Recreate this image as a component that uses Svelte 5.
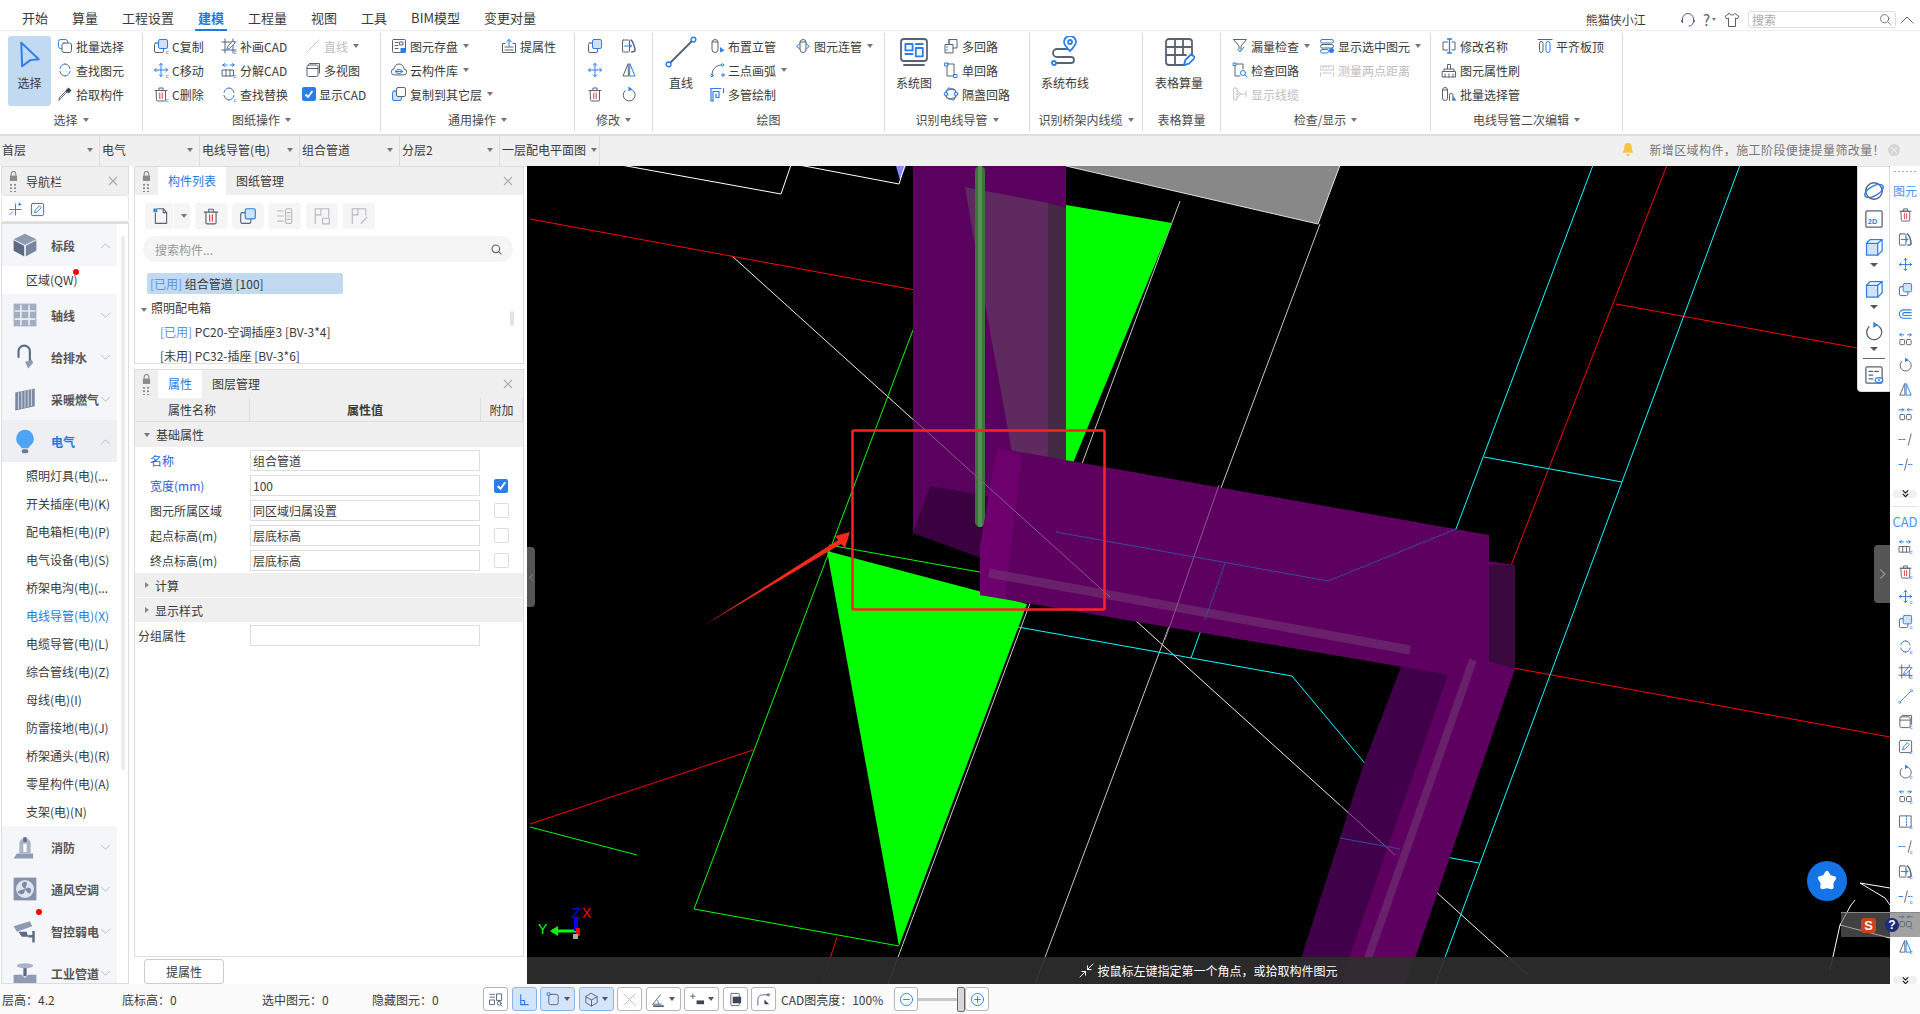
<script lang="ts">
  // icon strokes: default comes from .ic, these override per shape
  const b = 'stroke="#2b7de9"';
  const r = 'stroke="#e23b3b"';
  const fb = 'fill="#cfe2fb"';
  const c = '<text x="12.5" y="15.5" font-size="6" font-family="Liberation Sans" fill="#2b7de9" stroke="none">c</text>';
  const arrows4 = `<path ${b} d="M8 1.5v13M1.5 8h13M6.3 3.2 8 1.5l1.7 1.7M6.3 12.8 8 14.5l1.7-1.7M3.2 6.3 1.5 8l1.7 1.7M12.8 6.3 14.5 8l-1.7 1.7" stroke-dasharray="none"/>`;
  const trash = `<path d="M3.5 4.5h9v9.5a1 1 0 0 1-1 1h-7a1 1 0 0 1-1-1zM2 4.5h12M6 4.5V2h4v2.5"/><path ${r} d="M6.8 7v5.5M9.2 7v5.5"/>`;
  const copy = `<rect x="1.5" y="5" width="9" height="9.5" rx="1.5"/><rect x="5.5" y="1.5" width="9" height="9" rx="1.5" ${fb} ${b}/>`;
  const rotate = `<path d="M9 3a6 6 0 1 1-5 1.6"/><path fill="#2b7de9" stroke="none" d="M7.5.5 11 3 7.5 5.5z"/>`;
  const swap = `<path ${b} d="M3 6.5C3.5 3.5 6 2 8 2M13 9.5c-.5 3-3 4.500-5 4.500"/><path d="M8 2c2.500 0 4.500 2 5 4.500M8 14c-2.500 0-4.500-2-5-4.500"/>`;
  const parts = `<path ${b} d="M2 3h4M2 3l1.500-1.500M2 3l1.500 1.500M14 3h-4M14 3l-1.500-1.500M14 3l-1.500 1.500"/><rect x="2" y="8" width="5" height="5.500" rx="1"/><rect x="9" y="8" width="5" height="5.500" rx="1"/>`;
  const partsIn = `<path ${b} d="M1 3h5M6 3 4.500 1.500M6 3 4.500 4.500M15 3h-5M10 3l1.500-1.500M10 3l1.500 1.500"/><rect x="2" y="8" width="5" height="5.500" rx="1"/><rect x="9" y="8" width="5" height="5.500" rx="1"/>`;
  const mirror = `<path d="M7 2 2 14h5z"/><path ${b} d="M9 2l5 12H9z"/>`;
  const crop = `<path d="M4 1v14M1 12h14M1 4h14M12 1v14"/><path ${b} fill="#fff" d="m6 11 1-3 5-5 2 2-5 5z"/>`;
  const window_ = `<rect x="2" y="3" width="11" height="11.500" rx="1.500"/><path d="M2 6.500h11M4.500 1.500H14.500V11"/>`;

  const icons: Record<string, string> = {
    cursor: `<path ${b} stroke-width="1.100" fill="none" d="M3 1.500 13 11 8.200 11.500 3.500 15z"/>`,
    batch: `<rect x="1.500" y="1.500" width="9" height="9" rx="2" ${b}/><rect x="5" y="5" width="9.500" height="9.500" rx="2" fill="#fff"/>`,
    find: swap,
    pick: `<path d="m10 6-6 6-2 2.500.5-3 6-6z"/><path fill="#3c4655" stroke="none" d="m8.500 4.500 3-3 3 3-3 3z"/>`,
    ccopy: copy + c,
    cmove: arrows4 + c,
    cdel: trash + c,
    patch: crop + c,
    explode: `<path ${b} d="M2 3h4M2 3l1.500-1.500M2 3l1.500 1.500M13 3H9M13 3l-1.500-1.500M13 3l-1.500 1.500"/><rect x="1.500" y="8" width="11" height="6" /><path d="M5 8v6M9 8v6"/>` + c,
    replace: swap + c,
    line: `<path d="M2 14 14 2"/>`,
    multi: window_,
    save: `<rect x="1.500" y="1.500" width="13" height="13" rx="1"/><path d="M4 4.500h3M4 7.500h3M4 10.500h3M9 4h3v3H9z"/><rect x="9.500" y="10" width="5" height="5" fill="#2b7de9" stroke="none"/>`,
    cloud: `<path d="M3.500 13a3 3 0 0 1-.5-6 5 5 0 0 1 10 0 3 3 0 0 1-.5 6z"/><ellipse ${b} cx="8" cy="9.500" rx="3.500" ry="2"/><path ${b} d="M4.500 9.500h7"/>`,
    copyfloor: `<rect x="1.500" y="5" width="9" height="9.500" rx="1.500" ${fb} ${b}/><rect x="5.500" y="1.500" width="9" height="9" rx="1.500" fill="#fff"/>`,
    extract: `<path ${b} d="M8 8V1.500M5.500 4 8 1.500 10.500 4"/><path d="M4 5.500H1.500v9h13v-9H12M4 9h8M4 12h8"/>`,
    copy,
    mirrorin: `<rect x="1.500" y="2" width="7" height="12" rx="1"/><path ${b} d="M3.500 8h7M8 5.500 10.500 8 8 10.500"/><path stroke-width="1.500" d="M10 2c2 1 4 8 4 10s-2 2-3.500 2"/>`,
    move: arrows4,
    mirror,
    trash,
    rotate,
    stand: `<rect x="3" y="1.500" width="6" height="13" rx="3"/><path d="M3 4h6"/><path fill="#2b7de9" stroke="none" d="m11 9 4.500 3.500-4.500 2z"/>`,
    link: `<rect x="5" y="1.500" width="6" height="13" rx="3"/><path d="M5 4h6"/><path ${b} d="M5 5.500 1.500 8.500 5 11M11 5.500l3.500 3-3.500 2.500"/>`,
    arc: `<path d="M3 13C3 7 7 3 13 3"/><circle cx="3" cy="13.500" r="1.200" ${b} fill="#fff"/><circle cx="13.500" cy="3" r="1.200" ${b} fill="#fff"/><circle cx="14" cy="13" r="1.200" ${b} fill="#fff"/>`,
    multipipe: `<path ${b} stroke-width="1.200" d="M2 2.500h10M14.500 2.500v4M4 15V5.500h6v6H7V8"/><path ${b} stroke-width="1.200" d="M2 2.500V15h2"/>`,
    loops: `<path d="M2 14.500V6.500h4V1.500h8V10H10v4.500zM6 6.500h4V10M6 1.500V6.500"/><path ${b} d="M3.500 9h1M3.500 12h1"/>`,
    single: `<path d="M4 3v11h8"/><rect x="2" y="1" width="3" height="3" ${b} fill="#fff"/><rect x="11" y="12.500" width="3" height="3" ${b} fill="#fff"/><path d="M4 2h7v11"/>`,
    ring: `<rect x="3" y="3" width="10" height="10" rx="4" stroke-width="1.500"/><circle cx="3" cy="8" r="1.800" ${b} fill="#cfe2fb"/><circle cx="13" cy="8" r="1.800" ${b} fill="#cfe2fb"/><circle cx="6" cy="3" r="1.200" ${b} fill="#fff"/><circle cx="10" cy="13" r="1.200" ${b} fill="#fff"/>`,
    funnel: `<path d="M1.500 1.500h13L9 8v4"/><path d="M1.500 1.500 7 8v3"/><path ${b} d="M6 11.500 8 14l4-5"/>`,
    checkloop: `<path d="M3 2v12h5M3 2h8v5"/><circle cx="11" cy="11" r="2.500" ${b}/><path ${b} d="m13 13 2 2"/><rect x="1.500" y="1" width="2.500" height="2.500" ${b} fill="#fff"/>`,
    showline: `<path d="M2 2h3v12H2zM5 8h9M5 4l4 4-4 4M14 5v6"/>`,
    showsel: `<rect x="1.500" y="1.500" width="13" height="3.500" rx="1.700" ${b}/><rect x="1.500" y="6.500" width="13" height="3.500" rx="1.700"/><rect x="1.500" y="11.500" width="8" height="3.500" rx="1.700" ${b}/><circle cx="12.500" cy="12.500" r="2.500" fill="#2b7de9" stroke="none"/>`,
    measure: `<path d="M1.500 4h13v4h-13zM1.500 11v3M14.500 11v3M4 11h8M4 4v2M7 4v2M10 4v2"/>`,
    rename: `<path d="M6.500 4H2v8h4.500M11 12h3V4h-3"/><path ${b} stroke-width="1.300" d="M8.500 1v14M6.500 1h4M6.500 15h4"/>`,
    brush: `<path d="M1.500 9.500h13v5.500h-13zM4 12v3M8 12v3M12 12v3M3 9.500V7h10v2.500M6.500 7V2.500h3V7"/>`,
    batchpipe: `<rect x="1.500" y="1.500" width="5" height="13" rx="2.500"/><path d="M1.500 4h5M8.500 14.500V9a1.700 1.700 0 0 1 3.400 0v5.500"/><path fill="#2b7de9" stroke="none" d="m12 10 3.500 4.500H12z"/>`,
    align: `<path d="M1 1.500h14"/><rect x="2.500" y="3.500" width="3.500" height="11" rx="1.700"/><rect x="9" y="3.500" width="4" height="11" rx="2" ${b}/>`,
    sysmap: `<rect x="1.500" y="1.500" width="13" height="11" rx="1.500" stroke-width=".9"/><path stroke-width=".9" d="M3 14.500h10"/><path ${b} stroke-width=".9" fill="none" d="M3.700 4h3.600v3.200H3.700zM3.700 9h3.600M8.900 4h3.500M8.900 6h3.500v4.200H8.900z"/>`,
    route: `<path stroke-width=".9" d="M11.500 6.500H4a2 2 0 0 0 0 4h7a1.500 1.500 0 0 1 0 3H3.500"/><circle cx="2.500" cy="13.500" r="1" ${b} stroke-width=".9" fill="#fff"/><path ${b} stroke-width=".9" fill="#fff" d="M10.500 7.500c-2-2-3-3.200-3-4.500a3 3 0 0 1 6 0c0 1.300-1 2.500-3 4.500z"/><circle cx="10.500" cy="3" r="1" ${b} stroke-width=".9"/>`,
    bigline: `<path stroke-width=".9" d="M2 14 14 2"/><circle cx="1.800" cy="14.200" r="1.200" ${b} stroke-width=".7" fill="#fff"/><circle cx="14.200" cy="1.800" r="1.200" ${b} stroke-width=".7" fill="#fff"/>`,
    table: `<path stroke-width=".9" d="M11 14.500H3a1.500 1.500 0 0 1-1.500-1.500V3A1.500 1.500 0 0 1 3 1.500h10A1.500 1.500 0 0 1 14.500 3v6M1.500 5.500h13M1.500 9.500h10M6 1.500v13M10 1.500v8"/><path ${b} stroke-width=".9" fill="#fff" d="m10.500 14.500.7-2.500 3-3 1.800 1.800-3 3z"/>`,
    sphere: `<circle cx="8" cy="8" r="6"/><ellipse ${b} cx="8" cy="8" rx="7.500" ry="3.500" transform="rotate(-30 8 8)"/>`,
    view2d: `<rect x="1.500" y="1.500" width="13" height="13" rx="1"/><text x="3" y="12" font-size="6" font-weight="700" font-family="Liberation Sans" fill="#2b7de9" stroke="none">2D</text>`,
    cube: `<path ${b} ${fb} d="M2 5h9v9.500H2z"/><path ${b} d="M2 5 5 2h9.500v9l-3.500 3.500M11 5l3.500-3"/>`,
    listeye: `<rect x="1.500" y="1.500" width="13" height="13" rx="1"/><path d="M4 5h3M8.500 5h3M4 8h3M4 11h3"/><ellipse cx="12" cy="12" rx="3" ry="2" ${b} fill="#fff"/><circle cx="12" cy="12" r=".8" fill="#2b7de9" stroke="none"/>`,
    parts,
    partsIn,
    pipe2: `<path ${b} stroke-width="1.200" d="M14 3H6a4 4 0 0 0 0 9h8M14 6H6.500a1.500 1.500 0 0 0 0 3H14"/>`,
    dash1: `<path ${b} d="M1 8h2.500M5 8h2.500"/><path d="M14 2l-3 12"/>`,
    dash2: `<path ${b} d="M1 8h4M11 8h1.500M14 8h1"/><path d="M10 2 7 14"/>`,
    rect: `<path d="M2 2h12v12H2z"/><path ${b} stroke-dasharray="1.500 1.500" d="M9 2v12"/>`,
    plus: `<path ${b} d="M8 2v12M2 8h12"/><path ${b} d="M12.500 1v3M11 2.500h3"/><path fill="#fff" stroke="#2b7de9" d="M2 13.500l3-3"/>`,
    edit: `<rect x="1.500" y="1.500" width="13" height="13" rx="1.500"/><path ${b} d="m5 11 .7-2.500L10 4l2 2-4.500 4.500z"/>`,
    newfile: `<path d="M3 5.500V14.500h10V5L10 1.500H5"/><path d="M10 1.500V5h3"/><path ${b} stroke-dasharray="1 1" stroke-width="1.500" d="M2 2h2v2H2z"/>`,
    tree: `<path d="M1.500 3.500h5M1.500 8h5M1.500 12.500h5"/><rect x="8.500" y="1.500" width="5.500" height="13" rx="1"/><path d="M10 5h2.500M10 8h2.500M10 11h2.500"/>`,
    flpsave: `<path d="M2 14.500V1.500h12V9M2 7h5V1.500"/><rect x="8.500" y="10" width="6" height="5"/>`,
    flpedit: `<path d="M2 14.500V1.500h12V7M2 7h5V1.500M10 14.500 15 9"/>`,
    // status bar glyphs
    rearrange: `<path d="M2 2.500h5M2 5.500h5M2 8.500h5v5H2zM9.500 2h5v7h-5z"/><circle cx="12" cy="12" r="2"/><path d="m13.500 13.500 1.500 1.500"/>`,
    ortho: `<path ${b} stroke-width="1.200" d="M4 3v10.500h8M4 9h4v4.500"/>`,
    rrect: `<rect x="3" y="2.500" width="10" height="11" rx="2"/><rect x="1.500" y="1" width="2.500" height="2.500" ${b} fill="#fff"/>`,
    hexa: `<path d="M8 1.500 14 5v6.500L8 15l-6-3.500V5zM2 5l6 3.500L14 5M8 8.500V15"/>`,
    cross: `<path d="m2 2 12 12M14 2 2 14"/>`,
    angle: `<path d="M2 13 10 3M2 13h9"/><path stroke-width="2" d="M3 15h10"/><path ${b} d="M6.500 8.500c1 1 1.500 2.500 1.500 4"/>`,
    plusbar: `<path d="M3 2v5M.5 4.500h5"/><rect x="7" y="9" width="8" height="4" fill="#3c4655" stroke="none"/>`,
    layers: `<rect x="3" y="1.500" width="9" height="13" rx="1"/><rect x="5" y="5" width="9" height="7" fill="#3c4655" stroke="none"/>`,
    curve: `<path d="M2 14V8a5 5 0 0 1 5-5h6"/><circle cx="13" cy="3" r="1.200"/><path fill="#3c4655" stroke="none" d="m9 8 5 5H9z"/>`,
    // navigation pictograms, filled
    navcube: `<path fill="#8f9bb3" stroke="none" d="M8 1 15 4.500 8 8 1 4.500z"/><path fill="#5d6a84" stroke="none" d="M1 5 7.500 8.500V15L1 11.500z"/><path fill="#78859f" stroke="none" d="M15 5 8.500 8.500V15l6.500-3.500z"/>`,
    navgrid: `<rect x="1" y="1" width="14" height="14" fill="#a4aec2" stroke="none"/><path stroke="#e8ecf2" d="M5.500 2v12M10.500 2v12M2 5.500h12M2 10.500h12"/>`,
    navtap: `<path stroke="#5d6a84" stroke-width="1.300" d="M4 8V4.500a3.500 3.500 0 0 1 7 0V10"/><path fill="#8f9bb3" stroke="none" d="m8 11 4-1.500 1 2-3 3.500z"/>`,
    navrad: `<path fill="#7c89a3" stroke="none" d="M2 4 14 1.500v11L2 15z"/><path stroke="#c8d0dc" stroke-width=".7" d="M4 4v10M6 3.500v10M8 3v10M10 2.500v10M12 2v10"/>`,
    navbulb: `<path fill="#4da3f5" stroke="none" d="M8 1a5.500 5.500 0 0 1 3 10l-1 1.500H6L5 11A5.500 5.500 0 0 1 8 1z"/><rect x="6" y="13" width="4" height="2.500" rx="1" fill="#6d7a93" stroke="none"/>`,
    navfire: `<path fill="#8f9bb3" stroke="none" d="M1 15 3 12h10v3z"/><path fill="#aab4c6" stroke="none" d="M4.500 6a3.500 3.500 0 0 1 7 0v6h-7z"/><rect x="7" y="2" width="2" height="3" fill="#5d6a84" stroke="none"/><rect x="7" y="6" width="2" height="5" fill="#fff" stroke="none"/>`,
    navfan: `<rect x="1" y="1" width="14" height="14" fill="#8591ab" stroke="none"/><circle cx="8" cy="8" r="5.500" fill="#dfe4ec" stroke="none"/><path fill="#7c89a3" stroke="none" d="M8 8C5 6 6 3.500 8 3.500S9 6 8 8zM8 8c3-2 4.500 0 3.500 2S9 9.500 8 8zM8 8c0 3.500-2.500 4-4 2.500S6 8.500 8 8z"/>`,
    navcam: `<path fill="#8f9bb3" stroke="none" d="M1 5 11 2l1.500 3L3 8.500z"/><path fill="#5d6a84" stroke="none" d="M4 8.500h5l1 3H6zM12.500 8h1.500v7h-1.500z"/><path fill="#5d6a84" stroke="none" d="M10 10.500h3v1.500h-3z"/>`,
    navvalve: `<path fill="#8f9bb3" stroke="none" d="M1 9h5l2 2 2-2h5v6H1z"/><rect x="7" y="4" width="2" height="6" fill="#5d6a84" stroke="none"/><ellipse cx="8" cy="3.500" rx="5" ry="1.500" fill="#aab4c6" stroke="none"/>`
  };
  // the CAD half of the rail repeats these with a small "c" mark
  for (const k of ['bigline', 'multi', 'edit', 'rotate', 'parts', 'rect', 'dash1', 'mirrorin', 'dash2', 'partsIn', 'mirror']) {
    icons[k + 'C'] = icons[k] + c;
  }

  type Item = { t?: string; i?: string; caret?: boolean; off?: boolean; check?: boolean };
  type Col = { w: number; big?: string; label?: string; items?: Item[] };
  type Group = { label: string; caret: boolean; w: number; pad: number; cols: Col[] };

  const groups: Group[] = [
    { label: '选择', caret: true, w: 143, pad: 8, cols: [
      { w: 49, big: 'cursor', label: '选择' },
      { w: 80, items: [{ i: 'batch', t: '批量选择' }, { i: 'find', t: '查找图元' }, { i: 'pick', t: '拾取构件' }] }
    ] },
    { label: '图纸操作', caret: true, w: 238, pad: 10, cols: [
      { w: 68, items: [{ i: 'ccopy', t: 'C复制' }, { i: 'cmove', t: 'C移动' }, { i: 'cdel', t: 'C删除' }] },
      { w: 84, items: [{ i: 'patch', t: '补画CAD' }, { i: 'explode', t: '分解CAD' }, { i: 'replace', t: '查找替换' }] },
      { w: 72, items: [{ i: 'line', t: '直线', caret: true, off: true }, { i: 'multi', t: '多视图' }, { check: true, t: '显示CAD' }] }
    ] },
    { label: '通用操作', caret: true, w: 194, pad: 10, cols: [
      { w: 110, items: [{ i: 'save', t: '图元存盘', caret: true }, { i: 'cloud', t: '云构件库', caret: true }, { i: 'copyfloor', t: '复制到其它层', caret: true }] },
      { w: 60, items: [{ i: 'extract', t: '提属性' }] }
    ] },
    { label: '修改', caret: true, w: 78, pad: 12, cols: [
      { w: 34, items: [{ i: 'copy' }, { i: 'move' }, { i: 'trash' }] },
      { w: 20, items: [{ i: 'mirrorin' }, { i: 'mirror' }, { i: 'rotate' }] }
    ] },
    { label: '绘图', caret: false, w: 232, pad: 0, cols: [
      { w: 56, big: 'bigline', label: '直线' },
      { w: 86, items: [{ i: 'stand', t: '布置立管' }, { i: 'arc', t: '三点画弧', caret: true }, { i: 'multipipe', t: '多管绘制' }] },
      { w: 80, items: [{ i: 'link', t: '图元连管', caret: true }] }
    ] },
    { label: '识别电线导管', caret: true, w: 145, pad: 0, cols: [
      { w: 58, big: 'sysmap', label: '系统图' },
      { w: 80, items: [{ i: 'loops', t: '多回路' }, { i: 'single', t: '单回路' }, { i: 'ring', t: '隔盏回路' }] }
    ] },
    { label: '识别桥架内线缆', caret: true, w: 113, pad: 5, cols: [{ w: 60, big: 'route', label: '系统布线' }] },
    { label: '表格算量', caret: false, w: 78, pad: 6, cols: [{ w: 60, big: 'table', label: '表格算量' }] },
    { label: '检查/显示', caret: true, w: 210, pad: 11, cols: [
      { w: 87, items: [{ i: 'funnel', t: '漏量检查', caret: true }, { i: 'checkloop', t: '检查回路' }, { i: 'showline', t: '显示线缆', off: true }] },
      { w: 105, items: [{ i: 'showsel', t: '显示选中图元', caret: true }, { i: 'measure', t: '测量两点距离', off: true }] }
    ] },
    { label: '电线导管二次编辑', caret: true, w: 192, pad: 10, cols: [
      { w: 96, items: [{ i: 'rename', t: '修改名称' }, { i: 'brush', t: '图元属性刷' }, { i: 'batchpipe', t: '批量选择管' }] },
      { w: 70, items: [{ i: 'align', t: '平齐板顶' }] }
    ] }
  ];

  const tabs = ['开始', '算量', '工程设置', '建模', '工程量', '视图', '工具', 'BIM模型', '变更对量'];
  const selects = ['首层', '电气', '电线导管(电)', '组合管道', '分层2', '一层配电平面图'];

  const navTop = [
    { i: 'navcube', t: '标段', open: true },
    { sub: '区域(QW)', dot: true },
    { i: 'navgrid', t: '轴线' },
    { i: 'navtap', t: '给排水' },
    { i: 'navrad', t: '采暖燃气' },
    { i: 'navbulb', t: '电气', open: true, on: true }
  ];
  const navSubs = ['照明灯具(电)(...', '开关插座(电)(K)', '配电箱柜(电)(P)', '电气设备(电)(S)', '桥架电沟(电)(...', '电线导管(电)(X)', '电缆导管(电)(L)', '综合管线(电)(Z)', '母线(电)(I)', '防雷接地(电)(J)', '桥架通头(电)(R)', '零星构件(电)(A)', '支架(电)(N)'];
  const navBottom = [
    { i: 'navfire', t: '消防' },
    { i: 'navfan', t: '通风空调' },
    { i: 'navcam', t: '智控弱电', dot: true },
    { i: 'navvalve', t: '工业管道' }
  ];

  const propRows = [
    { k: '名称', v: '组合管道', blue: true, box: 'none' },
    { k: '宽度(mm)', v: '100', blue: true, box: 'on' },
    { k: '图元所属区域', v: '同区域归属设置', box: 'off' },
    { k: '起点标高(m)', v: '层底标高', box: 'off' },
    { k: '终点标高(m)', v: '层底标高', box: 'off' }
  ];

  const railTop = ['trash', 'mirrorin', 'move', 'copy', 'pipe2', 'parts', 'rotate', 'mirror', 'partsIn', 'dash1', 'dash2'];
  const railCad = ['explode', 'cdel', 'cmove', 'ccopy', 'replace', 'patch', 'bigline', 'multiC', 'editC', 'rotateC', 'partsC', 'rectC', 'dash1C', 'mirrorinC', 'dash2C', 'partsInC', 'mirrorC'];

  const statusBtns = [
    { i: 'rearrange', w: 25 },
    { i: 'ortho', w: 25, on: true },
    { i: 'rrect', w: 35, on: true, caret: true },
    { i: 'hexa', w: 35, on: true, caret: true },
    { i: 'cross', w: 25, off: true },
    { i: 'angle', w: 35, caret: true },
    { i: 'plusbar', w: 35, caret: true },
    { i: 'layers', w: 25 },
    { i: 'curve', w: 25 }
  ];

  // canvas drawing, in page coordinates (the svg viewBox starts at the canvas corner)
  const wires = [
    ['#fff', '621,165 781,194 791,165'],
    ['#fff', '799,165 899,184 905,165'],
    ['#eee', '732,256 1528,975'],
    ['#c8c8c8', '1180,201 888,984'],
    ['#c8c8c8', '1320,224 1035,984'],
    ['#f00', '530,219 926,292'],
    ['#f00', '530,824 753,750'],
    ['#f00', '837,937 822,984'],
    ['#f00', '1667,165 1473,663 1372,984'],
    ['#f00', '1616,304 1890,354'],
    ['#f00', '1481,662 1890,737'],
    ['#0f0', '913,330 694,909 899,946'],
    ['#0f0', '829,545 985,573'],
    ['#0f0', '530,827 637,855'],
    ['#0ff', '1593,165 1456,529 1328,581 1056,532'],
    ['#0ff', '1225,563 1191,658'],
    ['#0ff', '1018,627 1292,676 1368,767'],
    ['#0ff', '1484,457 1622,482'],
    ['#0ff', '1740,165 1435,984'],
    ['#0ff', '1340,838 1479,863'],
    ['#fff', '1860,883 1890,888'],
    ['#fff', '1860,883 1885,898 1890,905'],
    ['#fff', '1840,925 1890,938'],
    ['#fff', '1840,925 1851,905 1855,900'],
    ['#fff', '1840,925 1830,970']
  ];
  // the same wires where they show through the purple ducts
  const dimWires = [
    ['#8a5a90', '913,419 1110,597'],
    ['#8a5a90', '1340,805 1395,855'],
    ['#3a4a9a', '1056,532 1328,581 1456,529'],
    ['#3a4a9a', '1225,563 1205,620'],
    ['#3a4a9a', '1340,838 1400,849'],
    ['#8a5a90', '1219,485 1165,640']
  ];
</script>

{#snippet ic(name: string, size = 16)}
  <svg class="ic" viewBox="0 0 16 16" width={size} height={size}>{@html icons[name]}</svg>
{/snippet}

{#snippet caret()}
  <span class="caret"></span>
{/snippet}

{#snippet chev(up: boolean)}
  <svg class="chev" viewBox="0 0 12 8" width="11" height="7"><path d={up ? 'M1 7l5-5 5 5' : 'M1 1l5 5 5-5'} /></svg>
{/snippet}

{#snippet lock()}
  <div class="lock">
    <svg viewBox="0 0 10 11" width="9" height="10"><path d="M2.500 5V3a2.500 2.500 0 0 1 5 0v2" fill="none" stroke="#8a8a8a" stroke-width="1.300" /><rect x="1" y="5" width="8" height="6" fill="#8a8a8a" /></svg>
    <span class="grip"></span>
  </div>
{/snippet}

{#snippet closeX()}
  <svg class="close" viewBox="0 0 10 10" width="10" height="10"><path d="M1 1l8 8M9 1L1 9" /></svg>
{/snippet}

{#snippet more()}
  <svg viewBox="0 0 10 9" width="9" height="9" fill="none" stroke="#111" stroke-width="1.200"><path d="M2 1l3 3 3-3M2 5l3 3 3-3" /></svg>
{/snippet}

{#snippet navRow(row: any)}
  <div class="nav-row" class:on={row.on}>
    <span class="nav-ic">{@render ic(row.i, 26)}{#if row.dot}<i class="dot cam"></i>{/if}</span>
    <span class="nav-t">{row.t}</span>
    {@render chev(!!row.open)}
  </div>
{/snippet}

<div class="app">
  <div class="tabs">
    {#each tabs as t}
      <span class="tab" class:active={t === '建模'}>{t}</span>
    {/each}
    <span class="user">熊猫侠小江</span>
    <svg class="ic top" viewBox="0 0 16 16" width="16" height="16"><path d="M2.500 10V7a5.500 5.500 0 0 1 11 0v3M2.500 7.500c-1.500 0-1.500 3 0 3M13.500 7.500c1.500 0 1.500 3 0 3M13 11c0 2-2 3-4 3" /></svg>
    <span class="help">?</span><span class="caret tiny"></span>
    <svg class="ic top" viewBox="0 0 16 16" width="16" height="16"><path d="M5 1.500 1 4.500l2 2.500 1.500-1v8.500h7V6l1.500 1 2-2.500-4-3C10 3.500 6 3.500 5 1.500z" /></svg>
    <div class="topsearch">
      <span>搜索</span>
      <svg class="ic" viewBox="0 0 16 16" width="13" height="13"><circle cx="7" cy="7" r="5" /><path d="m11 11 3 3" /></svg>
    </div>
    <svg class="ic collapse" viewBox="0 0 14 8" width="14" height="8"><path d="M1 7l6-6 6 6" /></svg>
  </div>

  <div class="ribbon">
    {#each groups as g}
      <div class="group" style:width="{g.w}px">
        <div class="group-body" style:padding-left="{g.pad}px">
          {#each g.cols as col}
            <div class="col" style:width="{col.w}px">
              {#if col.big}
                <div class="big" class:picked={col.big === 'cursor'}>
                  {@render ic(col.big, col.big === 'cursor' ? 28 : 32)}
                  <span>{col.label}</span>
                </div>
              {:else}
                {#each col.items ?? [] as it}
                  <div class="item" class:off={it.off}>
                    {#if it.check}
                      <span class="check sm"><svg viewBox="0 0 12 12" width="12" height="12"><path d="M2.500 6.500 5 9l4.500-6" /></svg></span>
                    {:else}
                      {@render ic(it.i as string)}
                    {/if}
                    {#if it.t}<span class="item-t">{it.t}</span>{/if}
                    {#if it.caret}{@render caret()}{/if}
                  </div>
                {/each}
              {/if}
            </div>
          {/each}
        </div>
        <div class="group-label">{g.label}{#if g.caret}{@render caret()}{/if}</div>
      </div>
    {/each}
  </div>

  <div class="selbar">
    {#each selects as s}
      <div class="sel"><span>{s}</span>{@render caret()}</div>
    {/each}
    <div class="notice">
      <svg viewBox="0 0 14 16" width="14" height="15"><path fill="#f6c343" d="M7 1c3 0 4 2.500 4 5 0 3 1 4 2 5.500H1C2 10 3 9 3 6c0-2.500 1-5 4-5zM5 13h4a2 2 0 0 1-4 0z" /></svg>
      <span class="notice-t">新增区域构件，施工阶段便捷提量筛改量！</span>
      <span class="notice-x">×</span>
    </div>
  </div>

  <div class="main">
    <aside class="nav">
      <div class="nav-head">
        {@render lock()}
        <span class="nav-title">导航栏</span>
        {@render closeX()}
      </div>
      <div class="nav-tools">
        {@render ic('plus', 15)}
        <span class="edit-btn">{@render ic('edit', 15)}</span>
      </div>
      <div class="nav-wrap">
        <div class="nav-list">
          {#each navTop as row}
            {#if row.sub}
              <div class="nav-sub">{row.sub}{#if row.dot}<i class="dot"></i>{/if}</div>
            {:else}
              {@render navRow(row)}
            {/if}
          {/each}
          {#each navSubs as s}
            <div class="nav-sub" class:cur={s.startsWith('电线导管')}>{s}</div>
          {/each}
          {#each navBottom as row}
            {@render navRow(row)}
          {/each}
        </div>
        <div class="nav-track"></div>
      </div>
    </aside>

    <div class="panels">
      <section class="panel list">
        <div class="p-head">
          {@render lock()}
          <span class="p-tab active">构件列表</span>
          <span class="p-tab">图纸管理</span>
          {@render closeX()}
        </div>
        <div class="p-tools">
          <span class="tool split">{@render ic('newfile', 18)}<i class="tool-caret">{@render caret()}</i></span>
          <span class="tool">{@render ic('trash', 18)}</span>
          <span class="tool">{@render ic('copy', 18)}</span>
          <span class="tool faded">{@render ic('tree', 18)}</span>
          <span class="tool faded">{@render ic('flpsave', 18)}</span>
          <span class="tool faded">{@render ic('flpedit', 18)}</span>
        </div>
        <div class="p-search">
          <span>搜索构件...</span>
          <svg class="ic" viewBox="0 0 16 16" width="11" height="11"><circle cx="7" cy="7" r="5.500" stroke-width="1.600" /><path d="m11 11 3.500 3.500" stroke-width="1.600" /></svg>
        </div>
        <div class="tree">
          <div class="t-row picked"><em>[已用]</em> 组合管道 [100]</div>
          <div class="t-row folder"><span class="caret down"></span>照明配电箱</div>
          <div class="t-row leaf"><em>[已用]</em> PC20-空调插座3 [BV-3*4]</div>
          <div class="t-row leaf">[未用] PC32-插座 [BV-3*6]</div>
          <span class="tree-thumb"></span>
        </div>
      </section>

      <section class="panel props">
        <div class="p-head">
          {@render lock()}
          <span class="p-tab active">属性</span>
          <span class="p-tab">图层管理</span>
          {@render closeX()}
        </div>
        <div class="pt-head">
          <span>属性名称</span>
          <span class="strong">属性值</span>
          <span>附加</span>
        </div>
        <div class="pt-group"><span class="caret down"></span>基础属性</div>
        <div class="pt-rows">
          {#each propRows as row}
            <div class="pt-row">
              <span class="pt-k" class:blue={row.blue}>{row.k}</span>
              <span class="pt-v">{row.v}</span>
              <span class="pt-box">
                {#if row.box === 'on'}
                  <span class="check"><svg viewBox="0 0 12 12" width="13" height="13"><path d="M2.500 6.500 5 9l4.500-6" /></svg></span>
                {:else if row.box === 'off'}
                  <span class="unchecked"></span>
                {/if}
              </span>
            </div>
          {/each}
        </div>
        <div class="pt-group closed"><span class="caret right"></span>计算</div>
        <div class="pt-group closed"><span class="caret right"></span>显示样式</div>
        <div class="pt-row plain">
          <span class="pt-k">分组属性</span>
          <span class="pt-v"></span>
        </div>
      </section>

      <button class="extract">提属性</button>
    </div>

    <div class="canvas">
      <svg class="scene" viewBox="527 166 1363 818" width="1363" height="818">
        <polygon points="1066,166 1340,166 1318,224" fill="#888" />
        <polyline points="1066,166 1318,224 1340,165" fill="none" stroke="#ddd" />
        <polygon points="896,166 906,166 900,180" fill="#8888ff" />
        {#each wires as [color, pts]}
          <polyline points={pts} fill="none" stroke={color} stroke-width="1" />
        {/each}
        <polygon points="1066,205 1172,223 1066,480" fill="#0f0" />
        <polygon points="827,551 1027,604 899,946" fill="#0f0" />

        <polygon points="913,166 1066,166 1066,500 1050,580 913,533" fill="#5a005e" />
        <polygon points="965,187 1048,203 1048,506 1035,578 985,304" fill="#5e2a60" />
        <polygon points="1048,203 1066,208 1066,505 1048,570" fill="#442a44" />
        <polygon points="930,486 1060,509 1035,578 913,533" fill="#3a0040" />
        <rect x="975" y="166" width="10" height="361" rx="5" fill="#3a763a" />
        <rect x="978" y="166" width="4" height="361" fill="#568f56" />

        <polygon points="1404,660 1448,555 1515,565 1515,669 1406,984 1293,984 1364,764" fill="#5e0060" />
        <polygon points="1404,660 1448,675 1340,984 1293,984 1364,764" fill="#40004a" />
        <polygon points="1448,555 1489,565 1489,661 1448,675" fill="#680068" />
        <polygon points="1489,565 1515,565 1515,669 1489,661" fill="#3a0a3e" />
        <polygon points="997,448 1489,535 1489,661 1450,675 980,595 980,547" fill="#5e0060" />
        <polygon points="997,448 1022,455 1005,598 980,595 980,547" fill="#6e006e" />
        <line x1="989" y1="573" x2="1410" y2="650" stroke="#6f2f70" stroke-width="9" stroke-opacity=".7" />
        <line x1="1473" y1="660" x2="1359" y2="984" stroke="#6f2f70" stroke-width="8" stroke-opacity=".7" />
        {#each dimWires as [color, pts]}
          <polyline points={pts} fill="none" stroke={color} stroke-width="1" />
        {/each}

        <rect x="852.500" y="430.500" width="252" height="179" fill="none" stroke="#f22" stroke-width="2.500" rx="1" />
        <polygon points="703,626 838,540 835,536 850,532 845,548 841,544" fill="#f22a1a" />

        <g font-family="Liberation Sans" font-size="14">
          <text x="572" y="918" fill="#00f">Z</text>
          <text x="582" y="918" fill="#f00">X</text>
          <text x="538" y="934" fill="#0f0">Y</text>
        </g>
        <path d="M552 931h24" stroke="#0f0" stroke-width="3" />
        <path d="M550 931l8-5v10z" fill="#0f0" />
        <path d="M576 931v-14" stroke="#00f" stroke-width="4" />
        <path d="M578 928v8" stroke="#f00" stroke-width="4" />
        <rect x="573" y="934" width="5" height="5" fill="#aaa" />
      </svg>

      <span class="handle left"><svg viewBox="0 0 6 10" width="5" height="9"><path d="M5 1 1 5l4 4" /></svg></span>
      <span class="handle right"><svg viewBox="0 0 6 10" width="7" height="12"><path d="M1 1l4 4-4 4" /></svg></span>

      <div class="viewbox">
        <span class="v-it">{@render ic('sphere', 22)}</span>
        <span class="v-it">{@render ic('view2d', 20)}</span>
        <span class="v-it">{@render ic('cube', 20)}</span>
        <span class="v-caret"></span>
        <span class="v-it">{@render ic('cube', 20)}</span>
        <span class="v-caret"></span>
        <span class="v-it">{@render ic('rotate', 20)}</span>
        <span class="v-caret"></span>
        <span class="v-sep"></span>
        <span class="v-it">{@render ic('listeye', 20)}</span>
      </div>

      <button class="star" aria-label="收藏">
        <svg viewBox="0 0 20 20" width="24" height="24"><path fill="#fff" d="M10 1.500c1.500 0 2 2.500 3 3.500s4 .5 4.500 2-1.500 3.300-2 4.500.7 4-.5 5-3.500-.5-5-.5-3.800 1.500-5 .5-.000-3.800-.5-5-2.500-3-2-4.500 3.500-1 4.500-2 1.500-3.500 3-3.500z" /></svg>
      </button>

      <div class="prompt">
        <svg class="ic" viewBox="0 0 16 16" width="15" height="15"><path stroke="#fff" d="M15 1 9 7M9 3v4h4M1 15l6-6M7 13V9H3" /></svg>
        <span>按鼠标左键指定第一个角点，或拾取构件图元</span>
      </div>
    </div>

    <div class="rail">
      <div class="rail-dots"></div>
      <div class="rail-title small">图元</div>
      {#each railTop as name}
        <div class="rail-it">{@render ic(name, 15)}</div>
      {/each}
      <div class="rail-more">{@render more()}</div>
      <div class="rail-sep"></div>
      <div class="rail-title">CAD</div>
      {#each railCad as name}
        <div class="rail-it">{@render ic(name, 15)}</div>
      {/each}
      <div class="rail-more last">{@render more()}</div>
    </div>

    <div class="ime">
      <span class="ime-s">S</span>
      <span class="ime-q">?</span>
    </div>
  </div>

  <footer class="status">
    <span class="st" style:width="120px">层高：4.2</span>
    <span class="st" style:width="140px">底标高：0</span>
    <span class="st" style:width="110px">选中图元：0</span>
    <span class="st" style:width="111px">隐藏图元：0</span>
    <div class="st-btns">
      {#each statusBtns as s}
        <span class="st-btn" class:on={s.on} class:off={s.off} style:width="{s.w}px">
          {@render ic(s.i, 15)}{#if s.caret}{@render caret()}{/if}
        </span>
      {/each}
    </div>
    <span class="st-label">CAD图亮度：100%</span>
    <span class="st-btn round"><svg class="ic" viewBox="0 0 16 16" width="15" height="15"><circle cx="8" cy="8" r="6.500" stroke="#2b7de9" /><path d="M5 8h6" stroke="#2b7de9" /></svg></span>
    <span class="slider"><i></i></span>
    <span class="st-btn round"><svg class="ic" viewBox="0 0 16 16" width="15" height="15"><circle cx="8" cy="8" r="6.500" stroke="#2b7de9" /><path d="M5 8h6M8 5v6" stroke="#2b7de9" /></svg></span>
  </footer>
</div>

<style>
  :global(body) {
    margin: 0;
    background: #fff;
  }

  .app {
    width: 1920px;
    height: 1014px;
    display: flex;
    flex-direction: column;
    overflow: hidden;
    font-family: 'Noto Sans CJK SC', 'Liberation Sans', sans-serif;
    font-size: 12px;
    color: #3a3a3a;
    background: #fff;
  }

  .ic {
    fill: none;
    stroke: #596273;
    stroke-width: 1;
    stroke-linecap: round;
    stroke-linejoin: round;
    flex-shrink: 0;
  }

  .caret {
    display: inline-block;
    width: 0;
    height: 0;
    margin-left: 5px;
    border-left: 3px solid transparent;
    border-right: 3px solid transparent;
    border-top: 4px solid #777;
    vertical-align: middle;
  }

  .caret.down {
    margin: 0 4px 0 0;
  }

  .caret.right {
    margin: 0 6px 0 0;
    border-left: 4px solid #888;
    border-right: 0;
    border-top: 3px solid transparent;
    border-bottom: 3px solid transparent;
  }

  .caret.tiny {
    margin: 4px 8px 0 2px;
    border-top-width: 3px;
    border-left-width: 2px;
    border-right-width: 2px;
  }

  /* top tab row */
  .tabs {
    height: 25px;
    flex-shrink: 0;
    display: flex;
    align-items: center;
    padding: 5px 0 0 10px;
    border-bottom: 1px solid #eee;
    font-size: 13px;
  }

  .tab {
    position: relative;
    padding: 0 12px;
    line-height: 25px;
    height: 25px;
  }

  .tab.active {
    color: #1f7ae0;
    font-weight: 700;
  }

  .tab.active::after {
    content: '';
    position: absolute;
    left: 9px;
    right: 9px;
    bottom: -1px;
    height: 2px;
    background: #1f7ae0;
  }

  .user {
    margin: 4px 34px 0 auto;
    font-size: 12px;
  }

  .top {
    margin: 4px 7px 0 0;
  }

  .help {
    font-size: 15px;
    line-height: 1;
    margin-top: 4px;
    color: #596273;
  }

  .topsearch {
    width: 148px;
    height: 17px;
    box-sizing: border-box;
    display: flex;
    align-items: center;
    justify-content: space-between;
    padding: 0 3px;
    margin: 4px 0 0 1px;
    border: 1px solid #ddd;
    border-radius: 3px;
    font-size: 12px;
    color: #aaa;
  }

  .collapse {
    margin: 4px 6px 0 4px;
  }

  /* ribbon */
  .ribbon {
    height: 103px;
    flex-shrink: 0;
    display: flex;
    border-bottom: 2px solid #ddd;
  }

  .group {
    display: flex;
    flex-direction: column;
    box-sizing: border-box;
    margin-top: 2px;
    margin-bottom: 3px;
    border-right: 1px solid #d9d9d9;
  }

  .group-body {
    height: 74px;
    padding-top: 1px;
    display: flex;
  }

  .col {
    display: flex;
    flex-direction: column;
    flex-shrink: 0;
  }

  .item {
    height: 24px;
    display: flex;
    align-items: center;
    white-space: nowrap;
    color: #3a3a3a;
  }

  .item-t {
    margin-left: 3px;
  }

  .item.off {
    color: #bdbdbd;
  }

  .item.off .ic {
    opacity: 0.35;
  }

  .big {
    height: 70px;
    width: 100%;
    display: flex;
    flex-direction: column;
    align-items: center;
    box-sizing: border-box;
    padding-top: 2px;
    gap: 6px;
    white-space: nowrap;
  }

  .big.picked {
    width: 43px;
    margin-top: 2px;
    background: #c2d9f2;
    border-radius: 3px;
    padding-top: 4px;
    gap: 6px;
  }

  .group-label {
    flex: 1;
    display: flex;
    align-items: center;
    justify-content: center;
    color: #4a4a4a;
    white-space: nowrap;
  }

  .check {
    width: 14px;
    height: 14px;
    display: inline-flex;
    align-items: center;
    justify-content: center;
    background: #2b7de9;
    border-radius: 2px;
    flex-shrink: 0;
  }

  .check.sm {
    margin-left: -3px;
  }

  .check svg {
    fill: none;
    stroke: #fff;
    stroke-width: 1.800;
  }

  .unchecked {
    display: block;
    width: 13px;
    height: 13px;
    border: 1px solid #ddd;
    border-radius: 2px;
  }

  /* selector bar */
  .selbar {
    height: 30px;
    flex-shrink: 0;
    display: flex;
    background: #f0f0f0;
  }

  .sel {
    width: 100px;
    box-sizing: border-box;
    display: flex;
    align-items: center;
    justify-content: space-between;
    padding: 0 6px 3px 2px;
    border-right: 1px solid #dcdcdc;
    white-space: nowrap;
    font-size: 12px;
  }

  .notice {
    margin-left: auto;
    display: flex;
    align-items: center;
    padding-bottom: 3px;
    color: #777;
    letter-spacing: 0.4px;
  }

  .notice-t {
    margin: 0 3px 0 14px;
  }

  .notice-x {
    width: 12px;
    height: 12px;
    border-radius: 50%;
    background: #d4d4d4;
    color: #f4f4f4;
    font-size: 10px;
    line-height: 12px;
    text-align: center;
    margin-right: 20px;
    letter-spacing: 0;
  }

  /* main row */
  .main {
    position: relative;
    height: 818px;
    flex-shrink: 0;
    display: flex;
    overflow: hidden;
  }

  .lock {
    width: 22px;
    padding-left: 7px;
    box-sizing: border-box;
    display: flex;
    flex-direction: column;
    align-items: flex-start;
    gap: 2px;
  }

  .lock svg {
    display: block;
  }

  .grip {
    width: 7px;
    height: 9px;
    background-image: radial-gradient(circle, #8a8a8a 1px, transparent 1.100px);
    background-size: 4px 3.500px;
  }

  .close {
    fill: none;
    stroke: #aaa;
    stroke-width: 1.100;
    margin-left: auto;
    margin-right: 10px;
  }

  /* navigation */
  .nav {
    width: 128px;
    margin-left: 1px;
    display: flex;
    flex-direction: column;
    flex-shrink: 0;
  }

  .nav-head {
    height: 29px;
    display: flex;
    align-items: center;
    background: #efefef;
    border: 1px solid #ddd;
    border-bottom: 0;
    box-sizing: border-box;
  }

  .nav-title {
    margin-left: 2px;
  }

  .nav-tools {
    height: 27px;
    display: flex;
    align-items: center;
    gap: 7px;
    padding: 2px 0 0 6px;
    border: 1px solid #e4e4e4;
    box-sizing: border-box;
    border-radius: 3px;
  }

  .edit-btn {
    display: flex;
  }

  .nav-wrap {
    flex: 1;
    display: flex;
    border: 1px solid #ddd;
    border-top: 2px solid #ddd;
    box-sizing: border-box;
    min-height: 0;
  }

  .nav-list {
    width: 115px;
    overflow: hidden;
  }

  .nav-row {
    height: 42px;
    display: flex;
    align-items: center;
    background: #f5f6f9;
    padding-left: 10px;
    font-weight: 700;
    color: #555;
  }

  .nav-row.on {
    background: #edeff2;
  }

  .nav-row.on .nav-t {
    color: #1f7ae0;
  }

  .nav-ic {
    position: relative;
    display: flex;
    width: 39px;
  }

  .nav-t {
    flex: 1;
    white-space: nowrap;
  }

  .chev {
    fill: none;
    stroke: #b4bac6;
    stroke-width: 1.100;
    margin-right: 6px;
  }

  .nav-sub {
    position: relative;
    height: 28px;
    line-height: 28px;
    padding-left: 24px;
    white-space: nowrap;
    width: fit-content;
  }

  .nav-sub.cur {
    color: #1f7ae0;
  }

  .dot {
    position: absolute;
    top: 3px;
    right: -2px;
    width: 6px;
    height: 6px;
    border-radius: 50%;
    background: #f00;
  }

  .dot.cam {
    top: -9px;
    right: 9px;
  }

  .nav-track {
    width: 4px;
    height: 534px;
    margin: 12px 0 0 4px;
    background: #ececec;
    border-radius: 2px;
  }

  /* middle panels */
  .panels {
    width: 390px;
    margin-left: 5px;
    display: flex;
    flex-direction: column;
    flex-shrink: 0;
  }

  .panel {
    border: 1px solid #ddd;
    box-sizing: border-box;
  }

  .panel.list {
    height: 198px;
    position: relative;
    overflow: hidden;
  }

  .panel.props {
    height: 588px;
    margin-top: 5px;
  }

  .p-head {
    height: 28px;
    display: flex;
    align-items: center;
    background: #efefef;
  }

  .p-tab {
    height: 28px;
    line-height: 28px;
    padding: 0 10px;
  }

  .p-tab.active {
    background: #fff;
    color: #1f7ae0;
  }

  .lock + .p-tab {
    margin-left: 1px;
  }

  .p-tools {
    display: flex;
    gap: 5px;
    padding: 8px 0 0 10px;
  }

  .tool {
    width: 32px;
    height: 26px;
    display: flex;
    align-items: center;
    justify-content: center;
    background: #f5f5f5;
    border-radius: 3px;
  }

  .tool.split {
    width: 45px;
    justify-content: flex-start;
    padding-left: 7px;
    box-sizing: border-box;
  }

  .tool-caret {
    margin-left: 3px;
    padding-left: 2px;
    height: 100%;
    display: flex;
    align-items: center;
    border-left: 1px solid #fff;
  }

  .tool.faded .ic {
    opacity: 0.4;
  }

  .p-search {
    height: 26px;
    margin: 7px 10px 0 8px;
    padding: 0 11px 0 12px;
    display: flex;
    align-items: center;
    justify-content: space-between;
    background: #f5f5f5;
    border-radius: 13px;
    color: #999;
  }

  .tree {
    padding-top: 11px;
  }

  .t-row {
    height: 24px;
    line-height: 24px;
    white-space: nowrap;
  }

  .t-row em {
    font-style: normal;
    color: #5b93e0;
  }

  .t-row.picked {
    width: 196px;
    height: 21px;
    line-height: 21px;
    margin-left: 12px;
    padding-left: 3px;
    box-sizing: border-box;
    background: #c2d9f2;
    border-radius: 2px;
    margin-bottom: 2px;
  }

  .t-row.folder {
    padding-left: 6px;
  }

  .t-row.leaf {
    padding-left: 25px;
  }

  .tree-thumb {
    position: absolute;
    left: 375px;
    top: 144px;
    width: 4px;
    height: 15px;
    background: #e4e4e4;
    border-radius: 2px;
  }

  .pt-head {
    height: 24px;
    display: grid;
    grid-template-columns: 115px 231px 1fr;
    background: #efefef;
    border-bottom: 1px solid #ddd;
    box-sizing: border-box;
  }

  .pt-head span {
    display: flex;
    align-items: center;
    justify-content: center;
    border-right: 1px solid #ddd;
  }

  .pt-head .strong {
    font-weight: 700;
  }

  .pt-group {
    height: 25px;
    display: flex;
    align-items: center;
    background: #efefef;
    padding-left: 9px;
  }

  .pt-group .caret.down {
    margin-right: 6px;
    margin-left: 0;
  }

  .pt-group.closed {
    height: 24px;
    margin-bottom: 1px;
    padding-left: 10px;
  }

  .pt-rows {
    padding-top: 1px;
  }

  .pt-row {
    height: 25px;
    display: grid;
    grid-template-columns: 115px 230px 1fr;
    align-items: center;
  }

  .pt-k {
    padding-left: 15px;
    white-space: nowrap;
  }

  .pt-k.blue {
    color: #2b62d9;
  }

  .pt-row.plain .pt-k {
    padding-left: 3px;
  }

  .pt-v {
    height: 21px;
    line-height: 19px;
    box-sizing: border-box;
    border: 1px solid #ddd;
    padding-left: 2px;
  }

  .pt-box {
    display: flex;
    padding-left: 14px;
  }

  .extract {
    width: 80px;
    height: 25px;
    margin: 2px 0 0 10px;
    padding: 0;
    background: #fff;
    border: 1px solid #ccc;
    border-radius: 3px;
    font: inherit;
    color: #3a3a3a;
  }

  /* canvas */
  .canvas {
    position: relative;
    width: 1363px;
    margin-left: 3px;
    flex-shrink: 0;
    background: #000;
    overflow: hidden;
  }

  .scene {
    display: block;
  }

  .handle {
    position: absolute;
    display: flex;
    align-items: center;
    justify-content: center;
    background: #555;
  }

  .handle svg {
    fill: none;
    stroke: #999;
  }

  .handle.left {
    left: 0;
    top: 381px;
    width: 8px;
    height: 60px;
    border-radius: 0 4px 4px 0;
  }

  .handle.right {
    right: 0;
    top: 379px;
    width: 16px;
    height: 58px;
    border-radius: 4px 0 0 4px;
  }

  .viewbox {
    position: absolute;
    top: 0;
    right: 0;
    width: 33px;
    height: 226px;
    box-sizing: border-box;
    background: #fff;
    border-radius: 0 0 0 4px;
    border: 1px solid #ddd;
    display: flex;
    flex-direction: column;
    align-items: center;
    padding-top: 12px;
  }

  .v-it {
    height: 24px;
    display: flex;
    align-items: center;
    margin-bottom: 4px;
  }

  .v-caret {
    width: 0;
    height: 0;
    margin-bottom: 10px;
    border-left: 4px solid transparent;
    border-right: 4px solid transparent;
    border-top: 4px solid #555;
  }

  .v-sep {
    width: 22px;
    height: 1px;
    background: #666;
    margin: -3px 0 4px;
  }

  .star {
    position: absolute;
    left: 1280px;
    top: 695px;
    width: 40px;
    height: 40px;
    padding: 0;
    border: 0;
    border-radius: 50%;
    background: #1473e6;
    display: flex;
    align-items: center;
    justify-content: center;
  }

  .prompt {
    position: absolute;
    left: 0;
    right: 0;
    bottom: 0;
    height: 27px;
    display: flex;
    align-items: center;
    justify-content: center;
    gap: 3px;
    background: rgba(46, 46, 46, 0.92);
    color: #fff;
  }

  /* right rail */
  .rail {
    width: 30px;
    flex-shrink: 0;
    background: #fff;
    display: flex;
    flex-direction: column;
    align-items: center;
  }

  .rail-dots {
    width: 24px;
    height: 2px;
    margin: 5px 0 7px;
    background-image: radial-gradient(circle, #aaa 1px, transparent 1.100px);
    background-size: 4px 2px;
  }

  .rail-title {
    height: 24px;
    line-height: 24px;
    color: #4d94ef;
    font-size: 13px;
    white-space: nowrap;
  }

  .rail-title.small {
    height: 23px;
    line-height: 23px;
    font-size: 12px;
  }

  .rail-it {
    height: 25px;
    flex-shrink: 0;
    display: flex;
    align-items: center;
    justify-content: center;
  }

  .rail-more {
    width: 24px;
    height: 8px;
    margin-top: 13px;
    flex-shrink: 0;
    display: flex;
    align-items: center;
    justify-content: center;
    background: #f0f0f0;
    border-radius: 4px;
  }

  .rail-more.last {
    margin-top: 17px;
  }

  .rail-sep {
    width: 26px;
    height: 1px;
    background: #e4e4e4;
    margin: 8px 0 4px;
  }

  .ime {
    position: absolute;
    right: 0;
    top: 746px;
    width: 79px;
    height: 25px;
    box-sizing: border-box;
    padding-left: 20px;
    display: flex;
    align-items: center;
    gap: 9px;
    background: rgba(105, 105, 105, 0.62);
    border-top: 1px solid #888;
    font-family: 'Liberation Sans', sans-serif;
  }

  .ime-s {
    width: 15px;
    height: 15px;
    line-height: 15px;
    text-align: center;
    background: #c9431b;
    border-radius: 3px;
    color: #fff;
    font-size: 13px;
    font-weight: 700;
  }

  .ime-q {
    width: 14px;
    height: 14px;
    line-height: 14px;
    text-align: center;
    background: #1f2a7a;
    border-radius: 50%;
    color: #fff;
    font-weight: 700;
  }

  /* status bar */
  .status {
    height: 30px;
    flex-shrink: 0;
    display: flex;
    align-items: center;
    background: #fafafa;
    padding-left: 2px;
    position: relative;
    white-space: nowrap;
  }

  .st {
    flex-shrink: 0;
  }

  .st-btns {
    display: flex;
    gap: 3.5px;
  }

  .st-btn {
    height: 24px;
    box-sizing: border-box;
    display: flex;
    align-items: center;
    justify-content: center;
    background: #fff;
    border: 1px solid #b5b5b5;
    border-radius: 3px;
  }

  .st-btn .caret {
    margin-left: 3px;
    border-top-color: #555;
  }

  .st-btn.on {
    background: #d4e5fb;
    border-color: #8ab6ee;
  }

  .st-btn.off .ic {
    opacity: 0.4;
  }

  .st-btn.round {
    width: 24px;
    flex-shrink: 0;
  }

  .st-label {
    margin: 0 8px 0 5px;
    width: 105px;
  }

  .slider {
    position: relative;
    width: 47px;
    height: 3px;
    background: #c8c8c8;
    flex-shrink: 0;
  }

  .slider i {
    position: absolute;
    right: 0;
    top: -11px;
    width: 8px;
    height: 25px;
    box-sizing: border-box;
    background: #d8d8d8;
    border: 1px solid #666;
    border-radius: 2px;
  }
</style>
